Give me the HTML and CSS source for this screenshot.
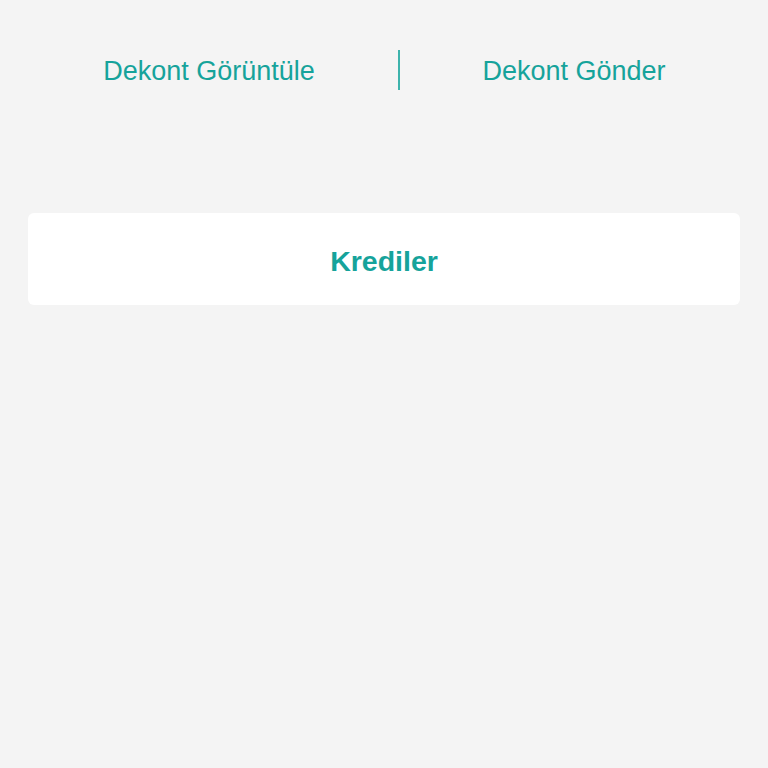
FILE: index.html
```html
<!DOCTYPE html>
<html lang="tr">
<head>
    <meta charset="UTF-8">
    <meta name="viewport" content="width=device-width, initial-scale=1.0">
    <title>Dekont</title>
    <link rel="stylesheet" href="styles.css">
</head>
<body>
    <div class="receipt-bar">
        <a href="#" class="receipt-link">Dekont Görüntüle</a>
        <div class="divider"></div>
        <a href="#" class="receipt-link">Dekont Gönder</a>
    </div>

    <div class="content">
        <a href="#" class="card-button">Krediler</a>
    </div>
</body>
</html>
```

FILE: styles.css
```css
body {
    margin: 0;
    font-family: "Liberation Sans", Arial, sans-serif;
    background-color: #f4f4f4;
    color: #16a39b;
    height: 768px;
}
.receipt-bar {
    display: grid;
    grid-template-columns: 378px 2px 1fr;
    align-items: center;
    height: 40px;
    padding: 50px 20px 0 20px;
}
.receipt-link {
    color: #16a39b;
    text-decoration: none;
    font-size: 27px;
    text-align: center;
    padding-top: 2px;
}
.divider {
    height: 40px;
    background-color: #3db3ac;
}
.content {
    padding: 123px 28px 0 28px;
}
.card-button {
    display: flex;
    justify-content: center;
    align-items: center;
    height: 92px;
    padding-top: 4px;
    box-sizing: border-box;
    background-color: #fff;
    border-radius: 6px;
    color: #16a39b;
    text-decoration: none;
    font-size: 28.5px;
    font-weight: bold;
}
```
